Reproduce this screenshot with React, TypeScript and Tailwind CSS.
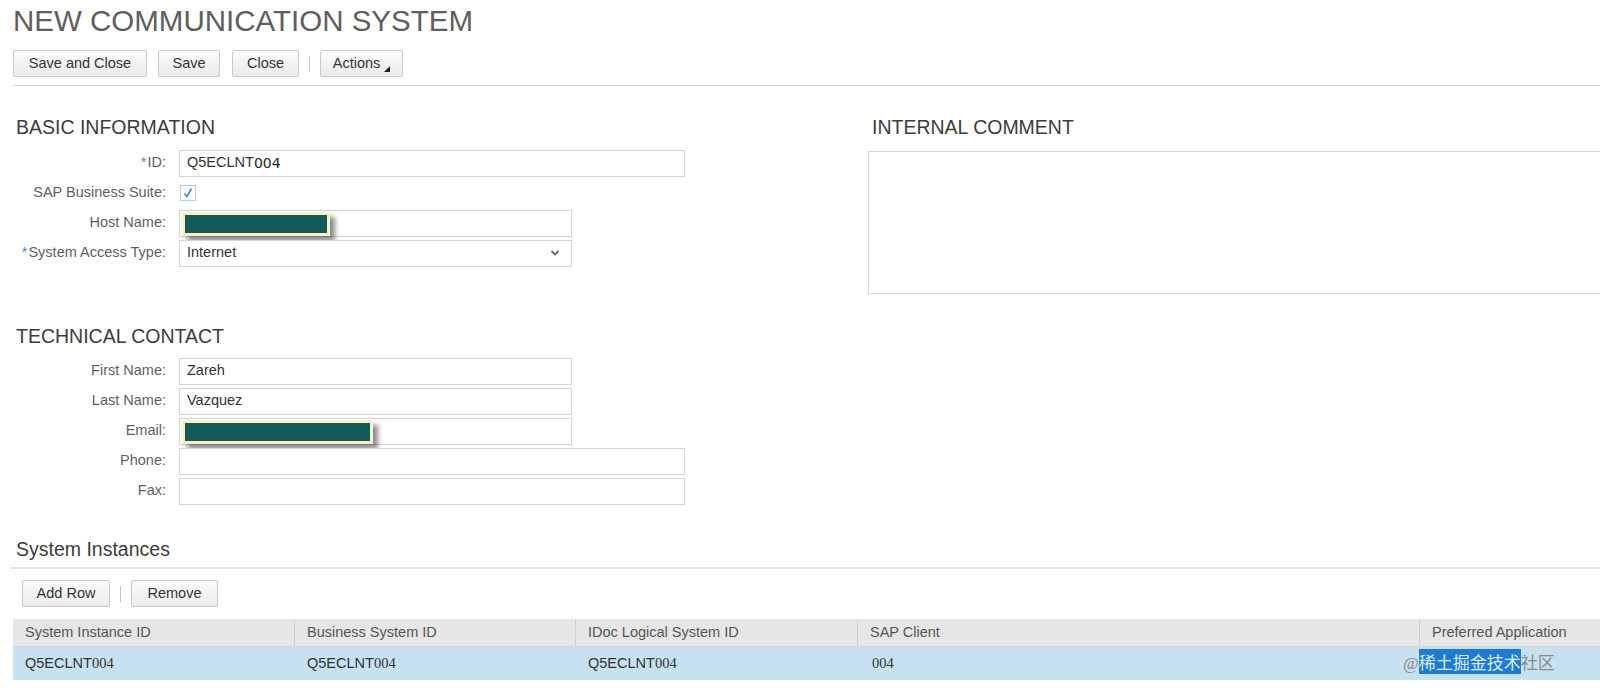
import React from "react";

const font = { fontFamily: '"Liberation Sans", Arial, sans-serif' };

const Btn = ({ children, w }: { children: React.ReactNode; w: string }) => (
  <button
    className={`h-[27px] ${w} border border-[#c9c9c9] rounded-[2px] bg-gradient-to-b from-[#fbfbfb] to-[#ebebeb] text-[14.5px] text-[#333] flex items-center justify-center`}
  >
    {children}
  </button>
);

const Sep = () => <div className="w-px h-[16px] bg-[#c4c4c4] mx-[10px]" />;

const Redact = ({ w }: { w: string }) => (
  <div
    className={`absolute left-[2px] top-[1px] h-[24px] ${w} bg-[#135a5c] border-[3px] border-[#fbf1c6] shadow-[5px_5px_5px_rgba(0,0,0,0.45)]`}
  />
);

const Row = ({
  label,
  req,
  children,
}: {
  label: string;
  req?: boolean;
  children: React.ReactNode;
}) => (
  <div className="flex items-center h-[30px]">
    <div className="w-[166px] flex justify-end items-center text-[14.5px] text-[#5f5f5f] shrink-0">
      {req && <span className="text-[#3a8ed2] mr-[1px]">*</span>}
      <span>{label}</span>
    </div>
    <div className="ml-[13px]">{children}</div>
  </div>
);

const Input = ({
  w,
  children,
}: {
  w: string;
  children?: React.ReactNode;
}) => (
  <div
    className={`relative h-[27px] ${w} border border-[#d4d4d4] bg-white flex items-center px-[7px] text-[14.5px] text-[#333]`}
  >
    {children}
  </div>
);

const Heading = ({ children }: { children: React.ReactNode }) => (
  <div className="text-[19.5px] leading-[20px] text-[#3c3c3c]">{children}</div>
);

const serif = { fontFamily: '"Liberation Serif", "Times New Roman", serif' };

const Cell = ({ children, w }: { children: React.ReactNode; w: string }) => (
  <div className={`${w} shrink-0 pl-[12px] flex items-center`}>{children}</div>
);

export default function App() {
  return (
    <div className="w-[1600px] h-[694px] overflow-hidden bg-white relative" style={font}>
      <div className="pl-[13px] pt-[6px] text-[29.5px] leading-[29px] text-[#5e5e5e]">
        NEW COMMUNICATION SYSTEM
      </div>

      <div className="flex items-center pl-[13px] mt-[15px]">
        <Btn w="w-[134px]">Save and Close</Btn>
        <div className="w-[11px]" />
        <Btn w="w-[62px]">Save</Btn>
        <div className="w-[12px]" />
        <Btn w="w-[67px]">Close</Btn>
        <Sep />
        <Btn w="w-[83px]">
          <span className="relative pr-[10px]">
            Actions
            <svg className="absolute right-0 bottom-[2px]" width="6" height="6" viewBox="0 0 6 6">
              <polygon points="6,0 6,6 0,6" fill="#222" />
            </svg>
          </span>
        </Btn>
      </div>

      <div className="ml-[13px] mt-[8px] h-px bg-[#dcdcdc]" />

      <div className="flex">
        <div className="w-[868px] shrink-0">
          <div className="pl-[16px] mt-[31px]">
            <Heading>BASIC INFORMATION</Heading>
          </div>
          <div className="mt-[11px]">
            <Row label="ID:" req>
              <Input w="w-[506px]">
                Q5ECLNT<span className="text-[#222]" style={{ fontFamily: '"DejaVu Sans", sans-serif', fontSize: "14px" }}>004</span>
              </Input>
            </Row>
            <Row label="SAP Business Suite:">
              <div className="w-[16px] h-[16px] border border-[#b9cfe0] bg-white flex items-center justify-center ml-[1px]">
                <svg width="12" height="12" viewBox="0 0 12 12">
                  <path d="M2.5 6.5 L5 9.5 L9.5 1.5" stroke="#3b8fd6" strokeWidth="1.6" fill="none" />
                </svg>
              </div>
            </Row>
            <Row label="Host Name:">
              <Input w="w-[393px]">
                <Redact w="w-[148px]" />
              </Input>
            </Row>
            <Row label="System Access Type:" req>
              <Input w="w-[393px]">
                <span className="flex-1">Internet</span>
                <svg width="10" height="8" viewBox="0 0 10 8" className="mr-[4px]">
                  <path d="M1.5 2 L5 5.5 L8.5 2" stroke="#666" strokeWidth="1.8" fill="none" />
                </svg>
              </Input>
            </Row>
          </div>

          <div className="pl-[16px] mt-[58px]">
            <Heading>TECHNICAL CONTACT</Heading>
          </div>
          <div className="mt-[10px]">
            <Row label="First Name:">
              <Input w="w-[393px]">Zareh</Input>
            </Row>
            <Row label="Last Name:">
              <Input w="w-[393px]">Vazquez</Input>
            </Row>
            <Row label="Email:">
              <Input w="w-[393px]">
                <Redact w="w-[191px]" />
              </Input>
            </Row>
            <Row label="Phone:">
              <Input w="w-[506px]" />
            </Row>
            <Row label="Fax:">
              <Input w="w-[506px]" />
            </Row>
          </div>
        </div>

        <div className="flex-1">
          <div className="pl-[4px] mt-[31px]">
            <Heading>INTERNAL COMMENT</Heading>
          </div>
          <div className="mt-[14px] h-[143px] w-[760px] border border-[#d4d4d4] bg-white" />
        </div>
      </div>

      <div className="pl-[16px] mt-[33px]">
        <Heading>System Instances</Heading>
      </div>
      <div className="ml-[10px] mt-[8px] h-[2px] bg-[#e6e6e6]" />

      <div className="flex items-center pl-[22px] mt-[11px]">
        <Btn w="w-[88px]">Add Row</Btn>
        <Sep />
        <Btn w="w-[87px]">Remove</Btn>
      </div>

      <div className="ml-[13px] mt-[12px] text-[14.5px]">
        <div className="flex h-[28px] bg-[#e6e6e6] text-[#555] border-b border-[#d6d6d6]">
          <Cell w="w-[282px] border-r border-[#cfcfcf]">System Instance ID</Cell>
          <Cell w="w-[281px] border-r border-[#cfcfcf]">Business System ID</Cell>
          <Cell w="w-[282px] border-r border-[#cfcfcf]">IDoc Logical System ID</Cell>
          <Cell w="w-[562px] border-r border-[#cfcfcf]">SAP Client</Cell>
          <Cell w="w-[300px]">Preferred Application</Cell>
        </div>
        <div className="flex h-[33px] bg-[#c6e1ef] text-[#333]">
          <Cell w="w-[282px]">Q5ECLNT<span style={serif}>004</span></Cell>
          <Cell w="w-[281px]">Q5ECLNT<span style={serif}>004</span></Cell>
          <Cell w="w-[282px]">Q5ECLNT<span style={serif}>004</span></Cell>
          <Cell w="w-[562px]"><span style={serif} className="pl-[2px]">004</span></Cell>
          <Cell w="w-[300px]"> </Cell>
        </div>
      </div>

      <div
        className="absolute left-[1403px] top-[651px] text-[17px] leading-[22px] text-[#8a8a8a]"
        style={{ fontFamily: '"Liberation Serif", "Noto Sans CJK SC", serif' }}
      >
        @<span className="bg-[#1f7bd2] text-[#d8ecf8]" style={{ fontFamily: '"Noto Sans CJK SC", sans-serif' }}>稀土掘金技术</span>
        <span style={{ fontFamily: '"Noto Sans CJK SC", sans-serif' }}>社区</span>
      </div>
    </div>
  );
}
